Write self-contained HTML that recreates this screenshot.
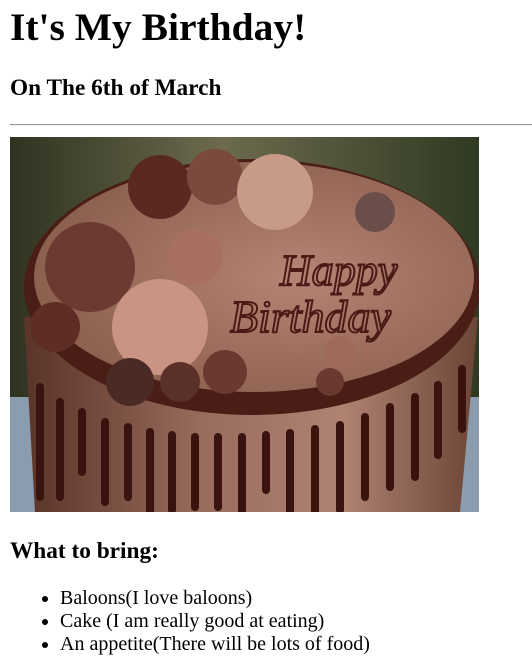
<!DOCTYPE html>
<html><head><style>
body{margin:0;width:532px;height:668px;overflow:hidden;background:#fff;font-family:"Liberation Serif",serif;color:#000;position:relative}
.a{position:absolute;white-space:nowrap;line-height:1}
h1{font-size:39.5px;top:8px;left:10px;margin:0}
h3{font-size:23.3px;top:77px;left:10px;margin:0}
hr{position:absolute;left:10px;top:124px;width:522px;margin:0;border:0;border-top:1px solid #9a9a9a;border-bottom:1px solid #eee;height:0}
ul{position:absolute;top:587px;left:0;margin:0;padding-left:60px;font-size:20px;line-height:23px}
</style></head><body>
<h1 class="a">It's My Birthday!</h1>
<h3 class="a">On The 6th of March</h3>
<hr>
<svg style="position:absolute;left:10px;top:137px" width="469" height="375" viewBox="0 0 469 375">
<defs>
<linearGradient id="bg" x1="0" y1="0" x2="1" y2="0"><stop offset="0" stop-color="#2e3320"/><stop offset=".45" stop-color="#6d6a4e"/><stop offset="1" stop-color="#2f3a22"/></linearGradient>
<linearGradient id="side" x1="0" y1="0" x2="1" y2="0"><stop offset="0" stop-color="#5a3428"/><stop offset=".4" stop-color="#9a6c5e"/><stop offset=".7" stop-color="#b08272"/><stop offset="1" stop-color="#6b4536"/></linearGradient>
<radialGradient id="top" cx=".6" cy=".5" r=".6"><stop offset="0" stop-color="#b48474"/><stop offset="1" stop-color="#8d5f4e"/></radialGradient>
</defs>
<rect width="469" height="375" fill="url(#bg)"/>
<rect y="260" width="469" height="115" fill="#8a9cae"/>
<path d="M14 180 L25 375 L450 375 L468 180Z" fill="url(#side)"/>
<ellipse cx="242" cy="150" rx="228" ry="128" fill="#4a1e16"/>
<ellipse cx="244" cy="140" rx="220" ry="115" fill="url(#top)"/>
<g stroke="#3a130e" stroke-width="8" stroke-linecap="round">
<path d="M30 250v110M50 265v95M72 275v60M95 285v80M118 290v70M140 295v80M162 298v75M185 300v70M208 300v70M232 300v75M256 298v55M280 296v80M305 292v90M330 288v85M355 280v80M380 270v80M405 260v80M428 248v70M452 232v60"/>
</g>
<circle cx="150" cy="50" r="32" fill="#5a2a22"/>
<circle cx="205" cy="40" r="28" fill="#7a4a3e"/>
<circle cx="265" cy="55" r="38" fill="#c89a88"/>
<circle cx="80" cy="130" r="45" fill="#6b3a30"/>
<circle cx="150" cy="190" r="48" fill="#c99482"/>
<circle cx="185" cy="120" r="28" fill="#a87060"/>
<circle cx="45" cy="190" r="25" fill="#5e2d25"/>
<circle cx="215" cy="235" r="22" fill="#6a3a30"/>
<circle cx="120" cy="245" r="24" fill="#4a2a24"/>
<circle cx="170" cy="245" r="20" fill="#5a3028"/>
<circle cx="365" cy="75" r="20" fill="#6b4d4a"/>
<circle cx="330" cy="215" r="16" fill="#a06a5a"/>
<circle cx="320" cy="245" r="14" fill="#6a3a30"/>
<text x="270" y="148" font-family="Liberation Serif,serif" font-style="italic" font-size="44" fill="none" stroke="#4a1a16" stroke-width="2">Happy</text>
<text x="220" y="195" font-family="Liberation Serif,serif" font-style="italic" font-size="46" fill="none" stroke="#4a1a16" stroke-width="2">Birthday</text>
</svg>
<h3 class="a" style="top:540px">What to bring:</h3>
<ul>
<li>Baloons(I love baloons)</li>
<li>Cake (I am really good at eating)</li>
<li>An appetite(There will be lots of food)</li>
</ul>
</body></html>
